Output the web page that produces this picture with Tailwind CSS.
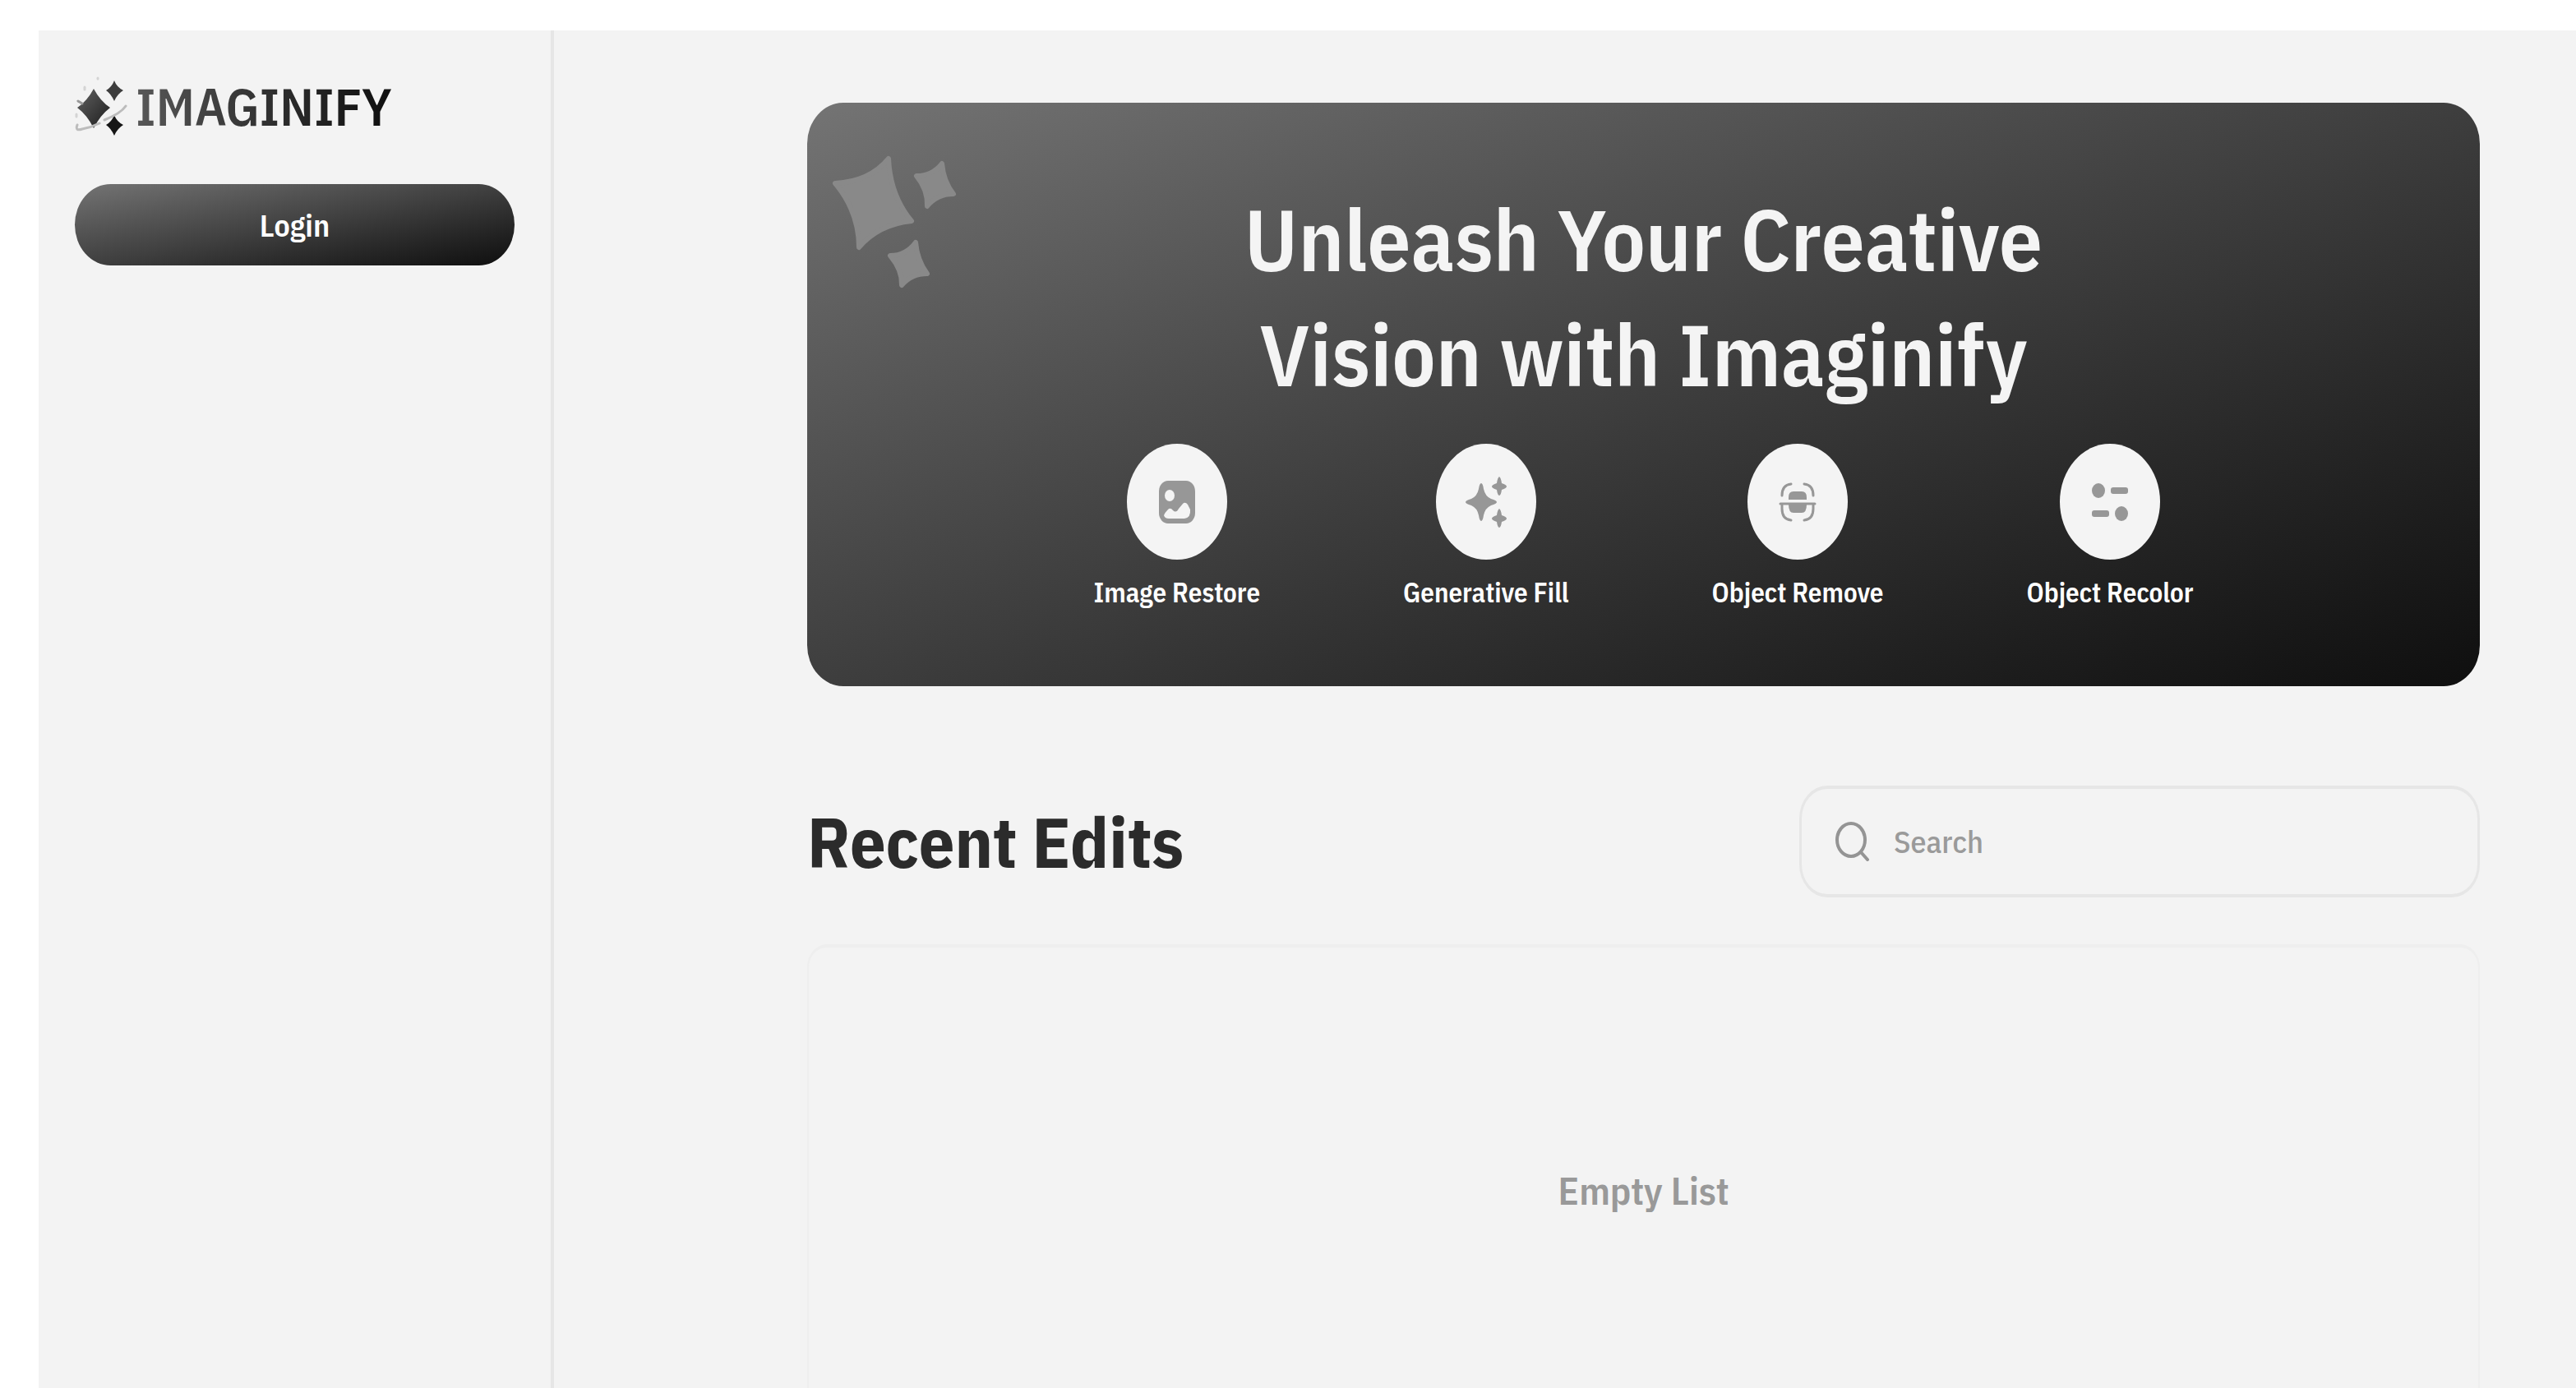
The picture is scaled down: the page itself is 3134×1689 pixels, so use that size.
<!DOCTYPE html>
<html lang="en">
<head>
<meta charset="utf-8">
<title>Imaginify</title>
<script src="https://cdn.jsdelivr.net/npm/@tailwindcss/browser@4"></script>
</head>
<body class="h-screen overflow-hidden bg-white pt-[37px] pl-[47px] font-['IBM_Plex_Sans_Condensed','IBM_Plex_Sans',Roboto,sans-serif]">
<div class="flex h-full bg-[#f3f3f3]">

  <aside class="flex w-[627px] shrink-0 flex-col border-r-4 border-[#e6e6e6] px-11 pt-[50px]">
    <a href="#" class="flex h-[84px] items-center gap-2">
      <svg class="h-[80px] w-[66px] shrink-0" viewBox="0 0 66 80" fill="none" aria-hidden="true">
        <defs>
          <linearGradient id="mark" x1="0" y1="0" x2="1" y2="1"><stop stop-color="#626262"/><stop offset="1" stop-color="#1c1c1c"/></linearGradient>
        </defs>
        <path d="M23 19Q31 34 43 42Q31 51 23 67Q15 51 3 42Q15 34 23 19Z" fill="url(#mark)"/>
        <path d="M48 9Q51 17 59 21Q52 25 48 34Q44 25 38 21Q45 17 48 9Z" fill="#3d3d3d"/>
        <path d="M48 51Q51 59 59 63Q52 67 48 76Q44 67 38 63Q45 59 48 51Z" fill="#161616"/>
        <path d="M3 63Q0 71 9 68Q20 66 30 61M36 57Q56 49 62 40" stroke="#bcbcbc" stroke-width="3" stroke-linecap="round"/>
        <path d="M4 34l5 3" stroke="#999999" stroke-width="3" stroke-linecap="round"/>
        <path d="M2 50v3M12 17v3M28 6v1" stroke="#d4d4d4" stroke-width="3" stroke-linecap="round"/>
      </svg>
      <span class="bg-linear-to-r from-[#585858] to-[#0f0f0f] bg-clip-text text-[64px] leading-[84px] font-semibold text-transparent">IMAGINIFY</span>
    </a>
    <button type="button" class="mt-[53px] h-[99px] w-full rounded-[44px/50px] bg-linear-to-br from-[#747474] via-[#404040] to-[#0f0f0f] text-[38px] font-semibold text-white">Login</button>
  </aside>

  <main class="min-w-0 flex-1 overflow-hidden pt-[88px] pr-[117px] pl-[308px]">
    <section class="relative flex h-[710px] flex-col items-center rounded-[44px/50px] bg-linear-to-br from-[#747474] via-[#3e3e3e] to-[#0f0f0f] pt-[96px]">
      <svg class="absolute top-[62px] left-[30px] h-[166px] w-[154px]" viewBox="0 0 154 166" fill="#898989" stroke="#898989" stroke-width="6" stroke-linejoin="round" aria-hidden="true">
        <path d="M69 6Q71 51 97 82Q57 86 33 114Q33 71 4 36Q46 34 69 6Z"/>
        <path d="M134 12Q136 34 148 49Q128 49 116 64Q117 44 103 27Q122 27 134 12Z"/>
        <path d="M102 108Q104 130 116 146Q97 146 85 160Q86 142 71 124Q90 124 102 108Z"/>
      </svg>
      <h1 class="text-center text-[105px] leading-[140px] font-semibold text-[#f4f4f4]">Unleash Your Creative<br>Vision with Imaginify</h1>
      <ul class="mt-[39px] flex gap-[174px] text-center text-[33px] leading-[48px] font-semibold text-white">
        <li><a href="#" class="flex flex-col items-center gap-4">
          <span class="flex h-[141px] w-[122px] items-center justify-center rounded-[50%] bg-[#f4f4f4]">
            <svg class="h-[52px] w-11" viewBox="0 0 44 52" aria-hidden="true"><rect width="44" height="52" rx="11" ry="13" fill="#979797"/><ellipse cx="13" cy="18" rx="6" ry="7" fill="#f4f4f4"/><path d="M6 42Q7 39 11 35Q14 32 17 36Q21 40 24 34L29 28Q32 25 35 29L38 35Q39 45 31 46H12Q7 46 6 42Z" fill="#f4f4f4"/></svg>
          </span>Image Restore</a></li>
        <li><a href="#" class="flex flex-col items-center gap-4">
          <span class="flex h-[141px] w-[122px] items-center justify-center rounded-[50%] bg-[#f4f4f4]">
            <svg class="h-[62px] w-[52px]" viewBox="0 0 52 62" fill="#979797" aria-hidden="true"><path d="M20 8Q22 8 23 15Q25 24 32 27Q39 29 39 31Q39 33 32 35Q25 38 23 47Q22 54 20 54Q18 54 17 47Q15 38 8 35Q1 33 1 31Q1 29 8 27Q15 24 17 15Q18 8 20 8Z"/><path d="M42 0Q44 1 45 8Q51 10 51 12Q51 14 45 16Q44 23 42 23Q40 23 39 16Q33 14 33 12Q33 10 39 8Q40 1 42 0Z"/><path d="M42 39Q44 40 45 47Q51 49 51 51Q51 53 45 55Q44 62 42 62Q40 62 39 55Q33 53 33 51Q33 49 39 47Q40 40 42 39Z"/></svg>
          </span>Generative Fill</a></li>
        <li><a href="#" class="flex flex-col items-center gap-4">
          <span class="flex h-[141px] w-[122px] items-center justify-center rounded-[50%] bg-[#f4f4f4]">
            <svg class="h-12 w-[46px]" viewBox="0 0 46 48" fill="none" stroke="#979797" stroke-width="3" stroke-linecap="round" aria-hidden="true"><path d="M4 16Q4 3 15 2M31 2Q42 3 42 16M4 28V32Q4 45 15 46M31 46Q42 45 42 32V28M2 26H44"/><path d="M12 21V18Q12 11 18 11H28Q34 11 34 18V21ZM12 27H34Q34 37 28 37H18Q12 37 12 27Z" fill="#979797" stroke="none"/></svg>
          </span>Object Remove</a></li>
        <li><a href="#" class="flex flex-col items-center gap-4">
          <span class="flex h-[141px] w-[122px] items-center justify-center rounded-[50%] bg-[#f4f4f4]">
            <svg class="h-12 w-[44px]" viewBox="0 0 44 48" fill="#979797" aria-hidden="true"><ellipse cx="8" cy="10" rx="8" ry="9"/><rect x="23" y="6" width="21" height="8" rx="3"/><rect y="34" width="21" height="8" rx="3"/><ellipse cx="36" cy="38" rx="8" ry="9"/></svg>
          </span>Object Recolor</a></li>
      </ul>
    </section>

    <div class="mt-[121px] flex items-center justify-between">
      <h2 class="text-[86px] leading-[120px] font-bold text-[#2b2b2b]">Recent Edits</h2>
      <label class="flex h-[136px] w-[828px] items-center gap-7 rounded-[34px/40px] border-x-3 border-y-4 border-[#e6e6e6] px-10">
        <svg class="h-12 w-[44px] shrink-0" viewBox="0 0 44 48" fill="none" stroke="#949494" stroke-width="4" stroke-linecap="round" aria-hidden="true"><ellipse cx="20" cy="22" rx="17" ry="20"/><path d="M32 37L40 46"/></svg>
        <input type="text" placeholder="Search" aria-label="Search" class="min-w-0 flex-1 bg-transparent text-[38px] leading-[52px] font-medium placeholder:text-[#9a9a9a] focus:outline-none">
      </label>
    </div>

    <div class="mt-[57px] flex h-[600px] items-center justify-center rounded-[24px/28px] border-x-2 border-y-4 border-[#eeeeee]">
      <p class="text-[47px] leading-[64px] font-semibold text-[#999999]">Empty List</p>
    </div>
  </main>
</div>
</body>
</html>
